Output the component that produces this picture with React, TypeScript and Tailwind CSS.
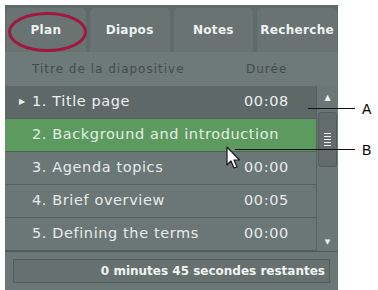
export default function App() {
  const tabs = ["Plan", "Diapos", "Notes", "Recherche"];
  const rows = [
    { title: "1. Title page", time: "00:08", current: true },
    { title: "2. Background and introduction", time: "", selected: true },
    { title: "3. Agenda topics", time: "00:00" },
    { title: "4. Brief overview", time: "00:05" },
    { title: "5. Defining the terms", time: "00:00" },
  ];

  return (
    <div className="relative w-[378px] h-[290px] bg-white overflow-hidden font-['DejaVu_Sans',sans-serif]">
      <div className="absolute left-[5px] top-[5px] w-[333px] h-[285px] bg-[#6b7776] flex flex-col">
        {/* tabs */}
        <div className="h-[47px] grid grid-cols-4 gap-[2px] pt-[2px] bg-[#5f6a69]">
          {tabs.map((t) => (
            <div
              key={t}
              className="flex items-center justify-center rounded-t-[6px] bg-[#687372] border-t border-x border-[#59636283] text-[12px] tracking-[0.3px] font-bold text-[#eef2f1]"
            >
              {t}
            </div>
          ))}
        </div>

        {/* column header */}
        <div className="h-[34px] flex items-center bg-[#6e7a79] text-[12px] tracking-[1px] text-[#434c4c]">
          <span className="pl-[27px] w-[241px] whitespace-nowrap">Titre de la diapositive</span>
          <span>Durée</span>
        </div>

        {/* list + scrollbar */}
        <div className="flex h-[165px]">
          <div className="w-[311px] flex flex-col">
            {rows.map((r) => (
              <div
                key={r.title}
                className={
                  "h-[33px] flex items-center border-b border-[#566060] text-[14.5px] tracking-[0.6px] " +
                  (r.selected
                    ? "bg-[#5c9a5f] text-[#e3efe2]"
                    : r.current
                    ? "bg-[#5d6867] text-[#edf1f0]"
                    : "bg-[#6b7776] text-[#e6ebea]")
                }
              >
                <span className="w-[27px] pl-[14px] text-[8px] text-[#e6ebea]">
                  {r.current ? "▶" : ""}
                </span>
                <span className="w-[212px] whitespace-nowrap">{r.title}</span>
                <span className="whitespace-nowrap">{r.time}</span>
              </div>
            ))}
          </div>
          <div className="w-[22px] flex flex-col items-center border-l border-[#566060] bg-[#6b7776]">
            <div className="h-[18px] flex items-end justify-center text-[8px] text-[#f2f5f4]">▲</div>
            <div className="mt-[8px] w-[19px] h-[55px] rounded-[3px] bg-[#616c6b] border border-[#525c5b] flex flex-col items-center justify-center gap-[2px]">
              {[0, 1, 2, 3, 4].map((i) => (
                <div key={i} className="w-[7px] h-[1px] bg-[#f2f5f4]" />
              ))}
            </div>
            <div className="flex-1" />
            <div className="h-[14px] flex items-start justify-center text-[7px] text-[#f2f5f4]">▼</div>
          </div>
        </div>

        {/* footer */}
        <div className="flex-1 border-t border-[#4f5958] px-[8px] pt-[7px] pb-[5px]">
          <div className="h-[24px] bg-[#65706f] border border-[#525c5b] flex items-center justify-end pr-[4px] text-[12px] font-bold text-[#f1f4f3]">
            0 minutes 45 secondes restantes
          </div>
        </div>
      </div>

      {/* highlight ellipse */}
      <div className="absolute left-[8px] top-[12px] w-[79px] h-[40px] rounded-[50%] border-[3px] border-[#a3163f]" />

      {/* callout lines */}
      <div className="absolute left-[308px] top-[108px] w-[47px] h-[1px] bg-[#111]" />
      <div className="absolute left-[235px] top-[149px] w-[120px] h-[1px] bg-[#111]" />
      <span className="absolute left-[362px] top-[99px] text-[14px] text-black font-['Liberation_Sans',sans-serif]">A</span>
      <span className="absolute left-[362px] top-[140px] text-[14px] text-black font-['Liberation_Sans',sans-serif]">B</span>

      {/* cursor */}
      <svg className="absolute left-[226px] top-[146px]" width="16" height="25" viewBox="0 0 16 25">
        <path d="M1 1 L1 19 L5 15 L8 22 L11 21 L8 14 L13.5 14 Z" fill="#ffffff" stroke="#1a1a1a" strokeWidth="1.2" strokeLinejoin="round" />
      </svg>
    </div>
  );
}
